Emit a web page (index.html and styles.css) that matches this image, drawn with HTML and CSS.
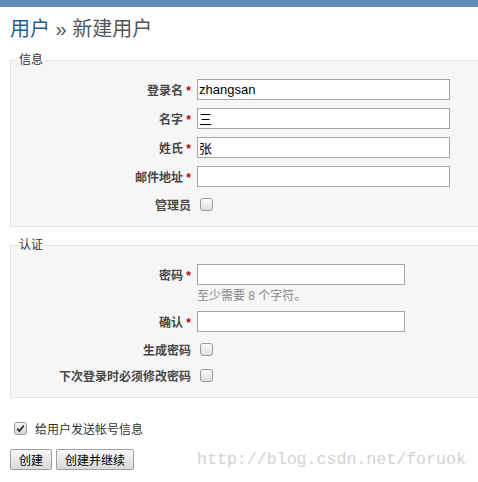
FILE: index.html
```html
<!DOCTYPE html>
<html lang="zh-CN">
<head>
    <meta charset="UTF-8">
    <meta name="viewport" content="width=device-width, initial-scale=1.0">
    <link rel="stylesheet" href="styles.css">
    <title>新建用户</title>
</head>
<body>

<div class="top-bar"></div>

<div id="content">
    <h2><a href="#">用户</a> &#187; 新建用户</h2>

    <form class="user-form" onsubmit="return false;">
        <fieldset class="box">
            <legend>信息</legend>
            <div class="row">
                <label for="login">登录名 <span class="required">*</span></label>
                <input type="text" id="login" class="field" value="zhangsan">
            </div>
            <div class="row">
                <label for="firstname">名字 <span class="required">*</span></label>
                <input type="text" id="firstname" class="field" value="三">
            </div>
            <div class="row">
                <label for="lastname">姓氏 <span class="required">*</span></label>
                <input type="text" id="lastname" class="field" value="张">
            </div>
            <div class="row">
                <label for="mail">邮件地址 <span class="required">*</span></label>
                <input type="text" id="mail" class="field">
            </div>
            <div class="row row-check">
                <label for="admin">管理员</label>
                <input type="checkbox" id="admin">
            </div>
        </fieldset>

        <fieldset class="box">
            <legend>认证</legend>
            <div class="row">
                <label for="password">密码 <span class="required">*</span></label>
                <input type="password" id="password" class="field short">
            </div>
            <div class="hint">至少需要 8 个字符。</div>
            <div class="row">
                <label for="confirm">确认 <span class="required">*</span></label>
                <input type="password" id="confirm" class="field short">
            </div>
            <div class="row row-check">
                <label for="generate">生成密码</label>
                <input type="checkbox" id="generate">
            </div>
            <div class="row row-check">
                <label for="must-change">下次登录时必须修改密码</label>
                <input type="checkbox" id="must-change">
            </div>
        </fieldset>

        <p class="send-info">
            <input type="checkbox" id="send-info" checked>
            <label for="send-info">给用户发送帐号信息</label>
        </p>

        <div class="actions">
            <button type="submit">创建</button>
            <button type="submit">创建并继续</button>
            <span class="watermark">http://blog.csdn.net/foruok</span>
        </div>
    </form>
</div>

</body>
</html>
```

FILE: styles.css
```css
body {
    margin: 0;
    font-family: "Liberation Sans", "Noto Sans CJK SC", sans-serif;
    font-size: 12px;
    color: #333;
    background: #fff;
    overflow: hidden;
}

.top-bar {
    height: 7px;
    background: #628db6;
}

#content {
    padding: 10px;
    width: 540px;
}

h2 {
    margin: 0 0 11px;
    font-size: 20px;
    line-height: 24px;
    font-weight: normal;
    color: #555;
}

h2 a {
    color: #1f5f94;
    text-decoration: none;
}

.box {
    margin: 0 0 10px;
    padding: 7px 6px 9px;
    border: 1px solid #e4e4e4;
    background: #f6f6f6;
}

.box legend {
    padding: 0 2px;
    font-size: 12px;
    line-height: 16px;
    color: #333;
}

.row {
    display: flex;
    align-items: center;
    height: 29px;
}

.row-check {
    height: 26px;
}

.row label {
    width: 174px;
    margin-right: 6px;
    text-align: right;
    font-weight: bold;
    color: #484848;
}

.required {
    color: #bb0000;
}

.field {
    box-sizing: border-box;
    width: 253px;
    height: 21px;
    margin: 0;
    padding: 0 1px;
    border: 1px solid #a6a6a6;
    background: #fff;
    font-family: "Liberation Sans", "Noto Sans CJK SC", sans-serif;
    font-size: 13px;
    color: #000;
    outline: none;
}

.field.short {
    width: 208px;
}

.hint {
    padding-left: 180px;
    margin-bottom: 4px;
    line-height: 14px;
    color: #888;
}

input[type="checkbox"] {
    appearance: none;
    -webkit-appearance: none;
    box-sizing: border-box;
    width: 13px;
    height: 13px;
    margin: 0 0 0 3px;
    border: 1px solid #9a9a9a;
    border-radius: 3px;
    background: linear-gradient(#fbfbfb, #dedede);
}

input[type="checkbox"]:checked {
    background: url("data:image/svg+xml,%3Csvg xmlns='http://www.w3.org/2000/svg' viewBox='0 0 11 11'%3E%3Cpath d='M2.2 5.6 L4.4 8 L8.8 2.6' fill='none' stroke='%23333' stroke-width='1.8'/%3E%3C/svg%3E") center / 11px 11px no-repeat, linear-gradient(#f4f4f4, #d8d8d8);
}

.send-info {
    display: flex;
    align-items: center;
    height: 20px;
    margin: 0;
    padding: 10px 0 0;
}

.send-info input {
    margin-left: 4px;
}

.send-info label {
    margin-left: 8px;
    color: #333;
}

.actions {
    display: flex;
    align-items: center;
    margin-top: 11px;
}

.actions button {
    height: 21px;
    margin: 0 4px 0 0;
    padding: 0 8px;
    border: 1px solid #a0a0a0;
    border-radius: 2px;
    background: linear-gradient(#f7f7f7, #dadada);
    font-family: "Liberation Sans", "Noto Sans CJK SC", sans-serif;
    font-size: 12px;
    color: #000;
}

.watermark {
    margin-left: 59px;
    font-family: "Liberation Mono", monospace;
    font-size: 16.6px;
    color: #d2d2d2;
}
```
